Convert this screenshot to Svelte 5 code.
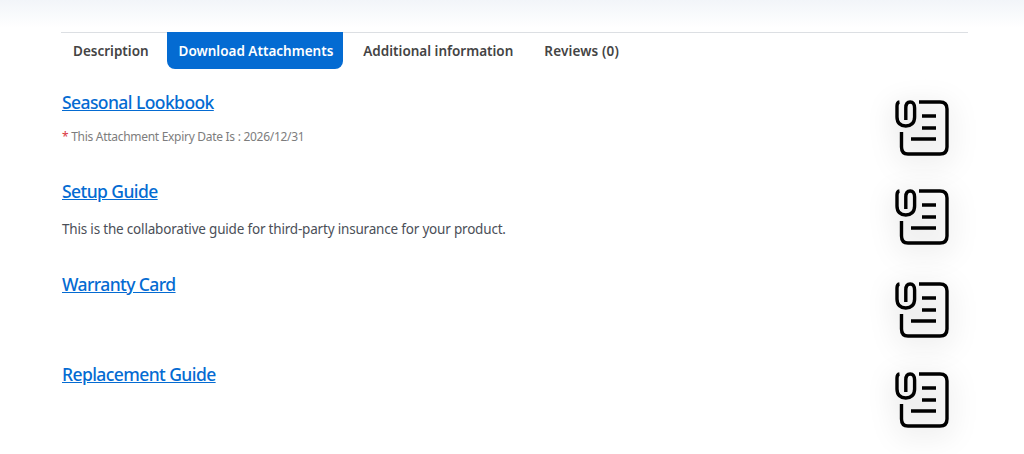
<script>
  const rows = [
    { title: 'Seasonal Lookbook', expiry: '2026/12/31', h: 89 },
    { title: 'Setup Guide', desc: 'This is the collaborative guide for third-party insurance for your product.', h: 93 },
    { title: 'Warranty Card', h: 90 },
    { title: 'Replacement Guide', h: 80 }
  ];
  const tabs = ['Description', 'Download Attachments', 'Additional information', 'Reviews (0)'];
</script>

<div class="page">
  <div class="topfade"></div>
  <div class="wrap">
    <nav class="tabs">
      {#each tabs as t, i}
        <a href="#t" class="tab" class:active={i === 1}>{t}</a>
      {/each}
    </nav>
    <div class="list">
      {#each rows as r}
        <div class="row" style="height:{r.h}px">
          <div class="info">
            <a href="#f" class="title">{r.title}</a>
            {#if r.expiry}
              <p class="expiry"><span class="star">*</span> This Attachment Expiry Date Is : {r.expiry}</p>
            {/if}
            {#if r.desc}
              <p class="desc">{r.desc}</p>
            {/if}
          </div>
          <div class="icon">
            <svg width="54" height="57" viewBox="0 0 54 57" fill="none" stroke="#000" stroke-width="3.400" stroke-linecap="butt" stroke-linejoin="round">
              <path d="M24 2 H45 Q52 2 52 9 V47 Q52 54 45 54 H13 Q6.500 54 6.500 47 V32" />
              <path d="M4.500 2 C3 2.200 2 3.500 2 6 V17 C2 23 5.500 26 10.800 26 C16 26 19.600 23 19.600 17 V8 C19.600 4 18 2 15.200 2 C12.500 2 10.800 4 10.800 8 V20" />
              <path d="M27 16 H41 M27 28 H41 M16 39 H41" />
            </svg>
          </div>
        </div>
      {/each}
    </div>
  </div>
</div>

<style>
  :global(body) {
    margin: 0;
    background: #fff;
    font-family: "Noto Sans", "Open Sans", sans-serif;
  }
  .page {
    position: relative;
    height: 454px;
    overflow: hidden;
    padding-top: 32px;
    box-sizing: border-box;
  }
  .topfade {
    position: absolute;
    top: 0;
    left: 0;
    right: 0;
    height: 28px;
    background: linear-gradient(#f2f5f9, #fff);
  }
  .wrap {
    position: relative;
    margin: 0 56px 0 61px;
  }
  .tabs {
    display: flex;
    gap: 6px;
    height: 37px;
    border-top: 1px solid #dcdfe3;
    box-sizing: border-box;
  }
  .tab {
    display: flex;
    align-items: center;
    padding: 0 12px;
    font-size: 13.500px;
    font-weight: 600;
    color: #444;
    text-decoration: none;
    white-space: nowrap;
  }
  .tab:last-child {
    margin-left: 1px;
    letter-spacing: 0.15px;
  }
  .tab.active {
    background: #046bd2;
    color: #fff;
    border-radius: 0 0 8px 8px;
    margin: -1px 2px 0 0;
    padding-right: 10px;
    height: 37px;
  }
  .list {
    padding-top: 21px;
  }
  .row {
    display: flex;
    justify-content: space-between;
    align-items: flex-start;
  }
  .info {
    padding-left: 1px;
  }
  .title {
    display: inline-block;
    font-size: 17.500px;
    font-weight: 500;
    line-height: 24px;
    letter-spacing: -0.58px;
    color: #046bd2;
    text-decoration: underline;
  }
  .expiry {
    margin: 14px 0 0;
    font-size: 12px;
    line-height: 18px;
    letter-spacing: -0.29px;
    color: #7d7d7d;
  }
  .star {
    color: #d9363e;
  }
  .desc {
    margin: 16px 0 0;
    font-size: 13.500px;
    line-height: 20px;
    letter-spacing: -0.19px;
    color: #4b4f58;
  }
  .icon {
    margin: 10px 19px 0 0;
    width: 54px;
    height: 57px;
    filter: drop-shadow(0 6px 14px rgba(0, 0, 0, 0.24));
  }
  .icon svg {
    display: block;
  }
</style>
